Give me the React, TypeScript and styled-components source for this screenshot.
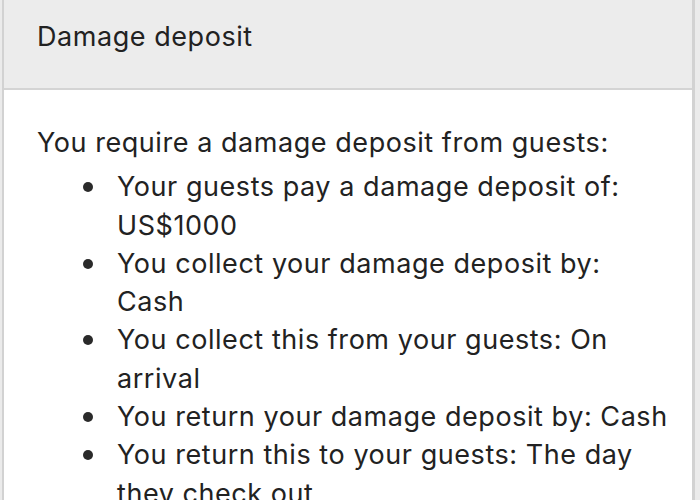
import React from "react";
import styled, { createGlobalStyle } from "styled-components";

const GlobalStyle = createGlobalStyle`
  html, body {
    margin: 0;
    padding: 0;
    background: #ebebeb;
  }
  body {
    font-family: Inter, "Noto Sans", "Liberation Sans", sans-serif;
    color: #222222;
    letter-spacing: 0.55px;
  }
`;

const Panel = styled.section`
  margin-left: 2px;
  width: 693px;
  box-sizing: border-box;
  min-height: 500px;
  border-left: 2px solid #d2d2d2;
  border-right: 3px solid #d2d2d2;
  background: #ffffff;
`;

const Header = styled.header`
  height: 90px;
  box-sizing: border-box;
  padding: 18px 33px 0;
  background: #ececec;
  border-bottom: 2px solid #d4d4d4;
  font-size: 27px;
  line-height: 38px;
`;

const Body = styled.div`
  padding: 34px 0 0 33px;
  font-size: 27px;
  line-height: 38.3px;
`;

const Intro = styled.p`
  margin: 0;
`;

const List = styled.ul`
  list-style: none;
  margin: 6px 0 0;
  padding: 0;
`;

const Item = styled.li`
  display: grid;
  grid-template-columns: 80px 1fr;
`;

const Dot = styled.span`
  width: 10px;
  height: 10px;
  margin: 14px 0 0 46px;
  border-radius: 50%;
  background: #2a2a2a;
`;

const Line = styled.span`
  display: block;
  white-space: nowrap;
`;

// wrapped the same way the phone screen wraps them
const terms = [
  ["Your guests pay a damage deposit of:", "US$1000"],
  ["You collect your damage deposit by:", "Cash"],
  ["You collect this from your guests: On", "arrival"],
  ["You return your damage deposit by: Cash"],
  ["You return this to your guests: The day", "they check out"],
];

export default function App() {
  return (
    <>
      <GlobalStyle />
      <Panel>
        <Header>Damage deposit</Header>
        <Body>
          <Intro>You require a damage deposit from guests:</Intro>
          <List>
            {terms.map((lines) => (
              <Item key={lines[0]}>
                <Dot />
                <div>
                  {lines.map((l) => (
                    <Line key={l}>{l}</Line>
                  ))}
                </div>
              </Item>
            ))}
          </List>
        </Body>
      </Panel>
    </>
  );
}
